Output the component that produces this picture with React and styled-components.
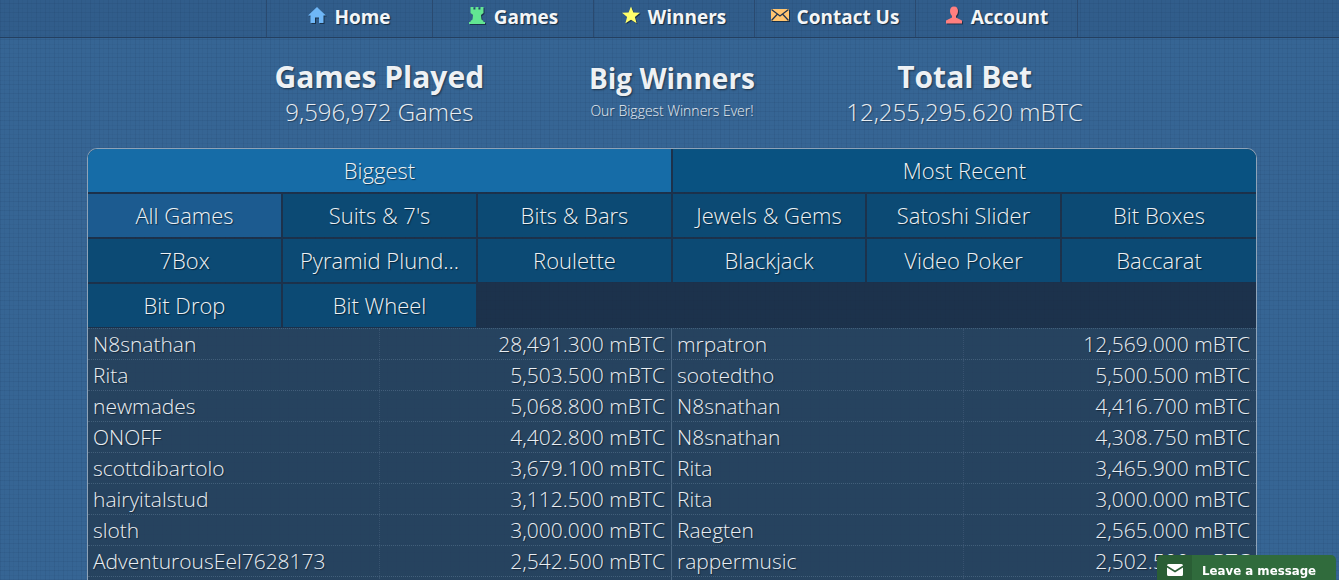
import React from 'react';
import styled, { createGlobalStyle } from 'styled-components';

const GlobalStyle = createGlobalStyle`
    html, body {
        margin: 0;
        height: 100%;
        overflow: hidden;
    }
    body {
        font-family: "Open Sans", "Liberation Sans", sans-serif;
        color: #e9eef3;
        background-color: #366594;
        background-image:
            repeating-linear-gradient(90deg, rgba(20, 45, 80, 0.1) 0 1px, transparent 1px 4px, rgba(20, 45, 80, 0.05) 4px 5px, transparent 5px 9px),
            repeating-linear-gradient(0deg, rgba(20, 45, 80, 0.1) 0 1px, transparent 1px 4px, rgba(20, 45, 80, 0.05) 4px 5px, transparent 5px 9px);
    }
`;

const Page = styled.div`
    width: 1344px;
    height: 580px;
    overflow: hidden;
`;

const NavBar = styled.nav`
    height: 37px;
    display: flex;
    justify-content: center;
    background: rgba(30, 60, 100, 0.18);
    border-bottom: 1px solid #233f60;
`;

const NavInner = styled.div`
    display: flex;
    width: 811px;
    margin-left: -1px;
    border-right: 1px solid #2a4a70;
`;

const NavItem = styled.a`
    width: ${p => p.$width}px;
    box-sizing: border-box;
    display: flex;
    align-items: center;
    justify-content: center;
    gap: 8px;
    padding: 0 0 4px 1px;
    border-left: 1px solid #2a4a70;
    font-size: 19px;
    font-weight: 700;
    color: #f4f6f8;
    text-shadow: 1px 1px 1px rgba(0, 0, 0, 0.55);
    cursor: pointer;
`;

const NavIcon = styled.svg`
    width: 18px;
    height: 18px;
    flex: none;
    margin-top: -3px;
    filter: drop-shadow(1px 1px 0 rgba(0, 0, 0, 0.45));
`;

const Stats = styled.section`
    width: 1170px;
    margin: 0 auto;
    padding: 20px 146px 0;
    box-sizing: border-box;
    height: 110px;
    display: grid;
    grid-template-columns: repeat(3, 1fr);
    text-align: center;
`;

const Stat = styled.div`
    white-space: nowrap;
    padding-top: ${p => (p.$small ? '1px' : '0')};
`;

const StatTitle = styled.div`
    font-size: ${p => (p.$small ? '28px' : '30px')};
    line-height: 38px;
    font-weight: 700;
    color: #eef1f4;
    text-shadow: 1px 1px 2px rgba(0, 0, 0, 0.5);
`;

const StatValue = styled.div`
    font-size: ${p => (p.$small ? '14px' : '24px')};
    line-height: ${p => (p.$small ? '28px' : '32px')};
    font-weight: 300;
    color: #e9eef3;
    text-shadow: 1px 1px 1px rgba(0, 0, 0, 0.35);
`;

const Panel = styled.section`
    width: 1170px;
    margin: 0 auto;
    box-sizing: border-box;
    border: 1px solid #8ea3b8;
    border-bottom: 0;
    border-radius: 10px 10px 0 0;
    overflow: hidden;
    background: rgba(24, 40, 62, 0.84);
`;

const TabGrid = styled.div`
    display: grid;
    grid-template-columns: ${p => p.$cols};
    grid-auto-rows: 43px;
    gap: 2px;
    padding-bottom: ${p => (p.$last ? '1px' : '2px')};
`;

const Tab = styled.div`
    display: flex;
    align-items: center;
    justify-content: center;
    min-width: 0;
    padding: 0 8px 2px;
    font-size: 22px;
    font-weight: 300;
    white-space: nowrap;
    color: #edf2f6;
    text-shadow: 1px 1px 1px rgba(0, 0, 0, 0.5);
    background: ${p => p.$bg};
`;

const Row = styled.div`
    height: 31px;
    box-sizing: border-box;
    display: grid;
    grid-template-columns: repeat(4, 1fr);
    background: rgba(56, 92, 124, 0.4);
    border-top: 1px dotted rgba(160, 185, 210, 0.24);
`;

const Cell = styled.div`
    padding: 0 ${p => (p.$right ? '6px' : '5px')};
    text-align: ${p => (p.$right ? 'right' : 'left')};
    font-size: 21px;
    line-height: 30px;
    font-weight: 300;
    white-space: nowrap;
    color: #e9eef3;
    text-shadow: 1px 1px 1px rgba(0, 0, 0, 0.4);
    border-right: 1px ${p => (p.$strong ? 'solid rgba(160, 185, 210, 0.3)' : 'dotted rgba(160, 185, 210, 0.14)')};
    &:last-child {
        border-right: 0;
    }
`;

const ChatWidget = styled.div`
    position: fixed;
    right: 3px;
    bottom: 0;
    width: 179px;
    height: 25px;
    display: flex;
    align-items: center;
    background: #306b3c;
    border-radius: 5px 5px 0 0;
    overflow: hidden;
    color: #fff;
    font-family: "DejaVu Sans", sans-serif;
    font-size: 11.8px;
    font-weight: 700;
`;

const ChatIcon = styled.div`
    width: 35px;
    height: 100%;
    display: flex;
    align-items: center;
    justify-content: center;
    padding-top: 5px;
    box-sizing: border-box;
    background: #2a5e35;
    margin-right: 10px;
`;

const ChatLabel = styled.span`
    padding-top: 7px;
    line-height: 20px;
`;

const HomeIcon = () => (
    <NavIcon viewBox="0 0 18 18">
        <path fill="#6fb7f7" d="M9 1 L18 9.5 L15.5 9.5 L15.5 17 L11 17 L11 11.5 L7 11.5 L7 17 L2.5 17 L2.5 9.5 L0 9.5 Z" />
    </NavIcon>
);

const RookIcon = () => (
    <NavIcon viewBox="0 0 18 18">
        <path fill="#62e692" d="M2.5 1 L5.5 1 L5.5 3.5 L7.5 3.5 L7.5 1 L10.5 1 L10.5 3.5 L12.5 3.5 L12.5 1 L15.5 1 L15.5 7 L13 9 L13.5 13.5 L15.5 15 L15.5 16 L17 16 L17 18 L1 18 L1 16 L2.5 16 L2.5 15 L4.5 13.5 L5 9 L2.5 7 Z" />
    </NavIcon>
);

const StarIcon = () => (
    <NavIcon viewBox="0 0 18 18">
        <path fill="#ffff6b" d="M9 0.5 L11.4 6.5 L18 6.8 L12.9 11 L14.6 17.3 L9 13.8 L3.4 17.3 L5.1 11 L0 6.8 L6.6 6.5 Z" />
    </NavIcon>
);

const MailIcon = () => (
    <NavIcon viewBox="0 0 18 18">
        <path fill="#ffc570" d="M0 3 L18 3 L18 15 L0 15 Z" />
        <path fill="none" stroke="#1f3350" strokeWidth="1.3" d="M0.5 3.5 L9 10 L17.5 3.5 M0.5 14.5 L6.5 8 M17.5 14.5 L11.5 8" />
    </NavIcon>
);

const UserIcon = () => (
    <NavIcon viewBox="0 0 18 18">
        <path fill="#ff7f7f" d="M9 0.5 C11.8 0.5 13 2.6 13 5 C13 7.2 12 9 11 10 L11 11.5 L17 14.5 L17 17.5 L1 17.5 L1 14.5 L7 11.5 L7 10 C6 9 5 7.2 5 5 C5 2.6 6.2 0.5 9 0.5 Z" />
    </NavIcon>
);

const navItems = [
    { label: 'Home', width: 166, icon: <HomeIcon /> },
    { label: 'Games', width: 161, icon: <RookIcon /> },
    { label: 'Winners', width: 161, icon: <StarIcon /> },
    { label: 'Contact Us', width: 161, icon: <MailIcon /> },
    { label: 'Account', width: 162, icon: <UserIcon /> },
];

const gameTabs = [
    ['All Games', "Suits & 7's", 'Bits & Bars', 'Jewels & Gems', 'Satoshi Slider', 'Bit Boxes'],
    ['7Box', 'Pyramid Plund...', 'Roulette', 'Blackjack', 'Video Poker', 'Baccarat'],
    ['Bit Drop', 'Bit Wheel'],
];

const winners = [
    ['N8snathan', '28,491.300 mBTC', 'mrpatron', '12,569.000 mBTC'],
    ['Rita', '5,503.500 mBTC', 'sootedtho', '5,500.500 mBTC'],
    ['newmades', '5,068.800 mBTC', 'N8snathan', '4,416.700 mBTC'],
    ['ONOFF', '4,402.800 mBTC', 'N8snathan', '4,308.750 mBTC'],
    ['scottdibartolo', '3,679.100 mBTC', 'Rita', '3,465.900 mBTC'],
    ['hairyitalstud', '3,112.500 mBTC', 'Rita', '3,000.000 mBTC'],
    ['sloth', '3,000.000 mBTC', 'Raegten', '2,565.000 mBTC'],
    ['AdventurousEel7628173', '2,542.500 mBTC', 'rappermusic', '2,502.500 mBTC'],
    ['', '', '', ''],
];

export default function App() {
    return (
        <Page>
            <GlobalStyle />
            <NavBar>
                <NavInner>
                    {navItems.map(item => (
                        <NavItem key={item.label} $width={item.width}>
                            {item.icon}
                            {item.label}
                        </NavItem>
                    ))}
                </NavInner>
            </NavBar>
            <Stats>
                <Stat>
                    <StatTitle>Games Played</StatTitle>
                    <StatValue>9,596,972 Games</StatValue>
                </Stat>
                <Stat $small>
                    <StatTitle $small>Big Winners</StatTitle>
                    <StatValue $small>Our Biggest Winners Ever!</StatValue>
                </Stat>
                <Stat>
                    <StatTitle>Total Bet</StatTitle>
                    <StatValue>12,255,295.620 mBTC</StatValue>
                </Stat>
            </Stats>
            <Panel>
                <TabGrid $cols="repeat(2, 1fr)">
                    <Tab $bg="rgba(22, 112, 172, 0.95)">Biggest</Tab>
                    <Tab $bg="rgba(8, 84, 132, 0.95)">Most Recent</Tab>
                </TabGrid>
                {gameTabs.map((row, i) => (
                    <TabGrid key={i} $cols="193px 193px 193px 192px 193px 194px" $last={i === gameTabs.length - 1}>
                        {row.map(name => (
                            <Tab key={name} $bg={name === 'All Games' ? 'rgba(28, 94, 148, 0.95)' : 'rgba(12, 76, 118, 0.95)'}>
                                {name}
                            </Tab>
                        ))}
                    </TabGrid>
                ))}
                {winners.map((w, i) => (
                    <Row key={i}>
                        <Cell>{w[0]}</Cell>
                        <Cell $right $strong>{w[1]}</Cell>
                        <Cell>{w[2]}</Cell>
                        <Cell $right>{w[3]}</Cell>
                    </Row>
                ))}
            </Panel>
            <ChatWidget>
                <ChatIcon>
                    <svg width="16" height="12" viewBox="0 0 16 12">
                        <path fill="#fff" d="M1.5 0 L14.5 0 Q16 0 16 1.5 L8 6.5 L0 1.5 Q0 0 1.5 0 Z M0 3.4 L8 8.4 L16 3.4 L16 10.5 Q16 12 14.5 12 L1.5 12 Q0 12 0 10.5 Z" />
                    </svg>
                </ChatIcon>
                <ChatLabel>Leave a message</ChatLabel>
            </ChatWidget>
        </Page>
    );
}
